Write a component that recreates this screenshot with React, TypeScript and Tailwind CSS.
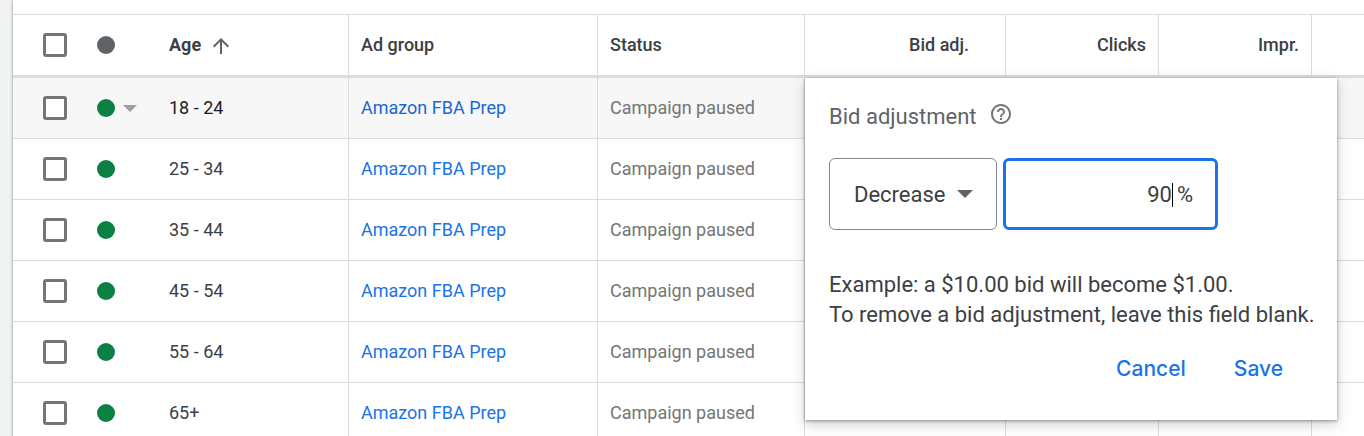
import React, { useState } from "react";
import { MdArrowUpward, MdHelpOutline } from "react-icons/md";

const ages = ["18 - 24", "25 - 34", "35 - 44", "45 - 54", "55 - 64", "65+"];

const cell = "h-[61px] border-b border-[#dadce0] px-3";
const divided = "border-r border-[#dadce0]";
const head = "h-16 border-t border-b-3 border-[#dadce0] px-3 font-medium text-[#3c4043]";

const Checkbox: React.FC<{ label: string }> = ({ label }) => (
  <input
    type="checkbox"
    aria-label={label}
    className="block size-6 appearance-none rounded-[3px] border-3 border-[#757575] bg-white checked:bg-[#1a73e8]"
  />
);

const BidPopup: React.FC = () => {
  const [mode, setMode] = useState("Decrease");
  const [value, setValue] = useState("90");

  return (
    <div className="absolute top-0 left-0 z-10 h-[342px] w-[532px] bg-white px-6 pt-6 text-[22px] text-[#3c4043] shadow-[0_1px_3px_rgba(60,64,67,0.5),0_4px_12px_rgba(60,64,67,0.25)]">
      <div className="flex h-[30px] gap-3">
        <label htmlFor="bid-value" className="leading-[30px] text-[#5f6368]">
          Bid adjustment
        </label>
        <button aria-label="Help" className="size-6 text-[#757575]">
          <MdHelpOutline size={24} />
        </button>
      </div>

      {/* Direction + percentage */}
      <div className="mt-[26px] flex gap-[6px]">
        <div className="relative w-[168px]">
          <select
            aria-label="Adjustment direction"
            value={mode}
            onChange={(e) => setMode(e.target.value)}
            className="h-[72px] w-full appearance-none rounded-md border border-[#80868b] bg-white pt-[2px] pl-6 outline-none"
          >
            <option>Decrease</option>
            <option>Increase</option>
          </select>
          <svg viewBox="0 0 16 8" className="pointer-events-none absolute top-8 right-6 h-2 w-4" fill="#5f6368">
            <path d="M0 0h16L8 8z" />
          </svg>
        </div>
        <div className="flex h-[72px] w-[215px] items-center rounded-md border-3 border-[#1a73e8] pt-[2px] pr-[22px]">
          <input
            id="bid-value"
            type="text"
            value={value}
            onChange={(e) => setValue(e.target.value)}
            className="min-w-0 flex-1 text-right outline-none"
          />
          <span className="mr-1 h-6 w-px bg-black" />
          <span>%</span>
        </div>
      </div>

      <p className="mt-10 leading-[30px] whitespace-nowrap">
        Example: a $10.00 bid will become $1.00.
        <br />
        To remove a bid adjustment, leave this field blank.
      </p>

      <div className="mt-6 flex justify-end gap-12 pr-[30px] font-['Inter',sans-serif] text-[21px] leading-[30px] font-medium text-[#1a73e8]">
        <button>Cancel</button>
        <button>Save</button>
      </div>
    </div>
  );
};

export default function App() {
  return (
    <div className="h-screen overflow-hidden bg-[#f1f3f4] pl-[13px] font-['Roboto',sans-serif] text-[18px] leading-[26px]">
      <div className="min-h-full bg-white pt-[14px] shadow-[0_0_3px_rgba(60,64,67,0.6)]">
        <table className="w-full table-fixed border-separate border-spacing-0 text-left">
          <colgroup>
            <col className="w-[84px]" />
            <col className="w-[60px]" />
            <col className="w-[192px]" />
            <col className="w-[249px]" />
            <col className="w-[207px]" />
            <col className="w-[201px]" />
            <col className="w-[153px]" />
            <col className="w-[153px]" />
            <col />
          </colgroup>
          <thead>
            <tr>
              <th className={`${head} pl-[30px]`}>
                <Checkbox label="Select all" />
              </th>
              <th className={`${head} pl-0`}>
                <span className="block size-[18px] rounded-full bg-[#5f6368]" />
              </th>
              <th className={`${head} ${divided}`}>
                <div className="flex items-end gap-2">
                  <span className="font-bold">Age</span>
                  <MdArrowUpward size={24} className="text-[#5f6368]" />
                </div>
              </th>
              <th className={`${head} ${divided}`}>Ad group</th>
              <th className={`${head} ${divided}`}>Status</th>
              <th className={`${head} ${divided} pr-9 text-right`}>Bid adj.</th>
              <th className={`${head} ${divided} text-right`}>Clicks</th>
              <th className={`${head} ${divided} text-right`}>Impr.</th>
              <th className={head}></th>
            </tr>
          </thead>
          <tbody>
            {ages.map((age, i) => (
              <tr key={age} className={i === 0 ? "bg-[#f7f7f7] text-[#202124]" : "text-[#3c4043]"}>
                <td className={`${cell} pl-[30px]`}>
                  <Checkbox label={`Select ${age}`} />
                </td>
                <td className={`${cell} pl-0`}>
                  <div className="flex items-center gap-2">
                    <span className="block size-[18px] shrink-0 rounded-full bg-[#0b8043]" />
                    {i === 0 && (
                      <button aria-label="Change status">
                        <svg viewBox="0 0 14 7" className="h-[7px] w-[14px]" fill="#9e9e9e">
                          <path d="M0 0h14L7 7z" />
                        </svg>
                      </button>
                    )}
                  </div>
                </td>
                <td className={`${cell} ${divided}`}>{age}</td>
                <td className={`${cell} ${divided}`}>
                  <a href="#" className={i === 0 ? "text-[#1967d2]" : "text-[#1a73e8]"}>
                    Amazon FBA Prep
                  </a>
                </td>
                <td className={`${cell} ${divided} text-[#757575]`}>Campaign paused</td>
                <td className={`${cell} ${divided} relative`}>{i === 0 && <BidPopup />}</td>
                <td className={`${cell} ${divided}`}></td>
                <td className={`${cell} ${divided}`}></td>
                <td className={cell}></td>
              </tr>
            ))}
          </tbody>
        </table>
      </div>
    </div>
  );
}
